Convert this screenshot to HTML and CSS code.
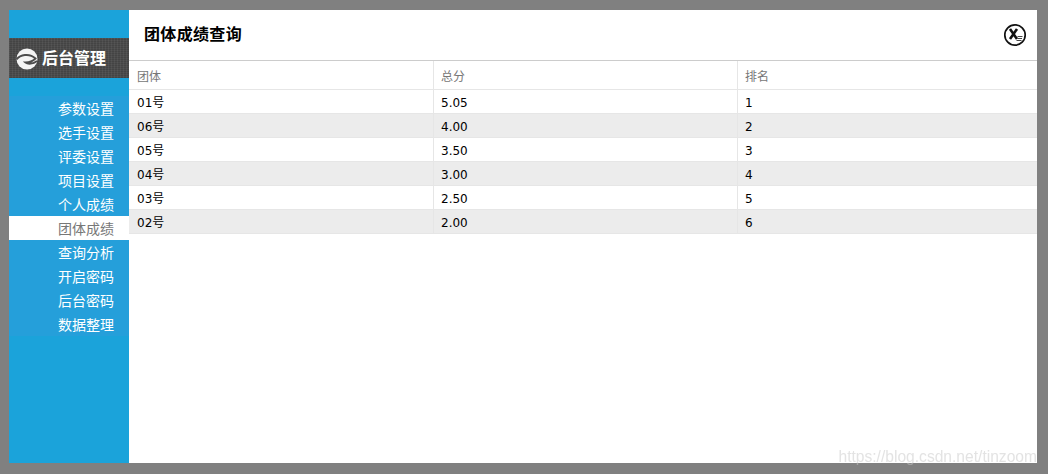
FILE: index.html
```html
<!DOCTYPE html>
<html lang="zh">
<head>
<meta charset="utf-8">
<title>团体成绩查询</title>
<link rel="stylesheet" href="styles.css">
</head>
<body>
<div class="window">
  <aside class="sidebar">
    <div class="logo">
      <svg class="logo-icon" width="22" height="22" viewBox="0 0 22 22">
        <circle cx="11" cy="11" r="10.5" fill="#f4f4f4"/>
        <path d="M0.5 11.5C4 7 13 4.5 19.5 10.5C17 13 13 14.5 9.5 14.5C12 16.5 17 16 21 13" fill="none" stroke="#4c4c4c" stroke-width="1.9"/>
      </svg>
      <span class="logo-text">后台管理</span>
    </div>
    <nav class="menu">
      <a class="menu-item">参数设置</a>
      <a class="menu-item">选手设置</a>
      <a class="menu-item">评委设置</a>
      <a class="menu-item">项目设置</a>
      <a class="menu-item">个人成绩</a>
      <a class="menu-item active">团体成绩</a>
      <a class="menu-item">查询分析</a>
      <a class="menu-item">开启密码</a>
      <a class="menu-item">后台密码</a>
      <a class="menu-item">数据整理</a>
    </nav>
  </aside>
  <main class="content">
    <header class="header">
      <h1 class="title">团体成绩查询</h1>
      <svg class="close" width="24" height="24" viewBox="0 0 24 24">
        <circle cx="12" cy="12" r="10.2" fill="#fff" stroke="#111" stroke-width="1.7"/>
        <path d="M7 6L14 16M14 6L7 16" stroke="#111" stroke-width="2.6" fill="none"/>
        <path d="M14.5 13.5H19.5M14.5 15.5H19M13.5 17.5H18.5" stroke="#444" stroke-width="1" fill="none"/>
      </svg>
    </header>
    <table class="grid">
      <colgroup>
        <col class="col-a">
        <col class="col-b">
        <col class="col-c">
      </colgroup>
      <thead>
        <tr><th>团体</th><th>总分</th><th>排名</th></tr>
      </thead>
      <tbody>
        <tr><td class="name">01号</td><td>5.05</td><td>1</td></tr>
        <tr><td class="name">06号</td><td>4.00</td><td>2</td></tr>
        <tr><td class="name">05号</td><td>3.50</td><td>3</td></tr>
        <tr><td class="name">04号</td><td>3.00</td><td>4</td></tr>
        <tr><td class="name">03号</td><td>2.50</td><td>5</td></tr>
        <tr><td class="name">02号</td><td>2.00</td><td>6</td></tr>
      </tbody>
    </table>
    <div class="watermark">https://blog.csdn.net/tinzoom</div>
  </main>
</div>
</body>
</html>
```
FILE: styles.css
```css
html, body {
  margin: 0;
  height: 100%;
}
body {
  background: #808080;
  padding: 10px 11px 11px 9px;
  box-sizing: border-box;
  font-family: "DejaVu Sans", "Noto Sans CJK SC", sans-serif;
  overflow: hidden;
}
.window {
  display: flex;
  height: 453px;
  background: #fff;
}
.sidebar {
  width: 120px;
  flex: none;
  background: #1ba3da;
  padding-top: 28px;
  box-sizing: border-box;
}
.logo {
  height: 40px;
  display: flex;
  align-items: center;
  gap: 4px;
  padding-left: 7px;
  background-color: #4c4c4c;
  background-image:
    repeating-linear-gradient(90deg, rgba(255,255,255,.05) 0 1px, transparent 1px 3px),
    repeating-linear-gradient(0deg, rgba(0,0,0,.1) 0 1px, transparent 1px 2px);
}
.logo-icon {
  margin-top: 1px;
}
.logo-text {
  color: #fff;
  font: bold 16px/20px "Noto Sans CJK SC", sans-serif;
  margin-top: -2px;
}
.menu {
  display: flex;
  flex-direction: column;
  margin-top: 18px;
  background: #259fda;
}
.menu-item {
  height: 24px;
  padding-right: 15px;
  text-align: right;
  font: 14px/24px "Noto Sans CJK SC", sans-serif;
  color: #fff;
}
.menu-item.active {
  background: #fff;
  color: #777;
}
.content {
  flex: 1;
  position: relative;
  min-width: 0;
}
.header {
  height: 51px;
  box-sizing: border-box;
  display: flex;
  align-items: center;
  justify-content: space-between;
  padding: 0 10px 0 15px;
  border-bottom: 1px solid #ccc;
}
.title {
  margin: -4px 0 0;
  font: bold 16px "Noto Sans CJK SC", sans-serif;
  letter-spacing: .33px;
  color: #000;
}
.grid {
  width: 908px;
  table-layout: fixed;
  border-collapse: separate;
  border-spacing: 0;
  font-size: 12px;
}
.col-a {
  width: 305px;
}
.col-b {
  width: 304px;
}
.grid th, .grid td {
  padding: 0 8px;
  text-align: left;
  border-right: 1px solid #e6e6e6;
  border-bottom: 1px solid #e6e6e6;
  box-sizing: border-box;
}
.grid th + th, .grid td + td {
  padding-left: 7px;
}
.grid th:last-child, .grid td:last-child {
  border-right: none;
}
.grid th {
  height: 29px;
  font-weight: normal;
  color: #777;
}
.grid td {
  height: 24px;
  padding-top: 3px;
  color: #000;
}
.grid td.name {
  padding-top: 0;
}
.grid tbody tr:nth-child(even) {
  background: #ececec;
}
.watermark {
  position: absolute;
  right: 0;
  bottom: -3px;
  font: 15.6px "Liberation Sans", sans-serif;
  color: rgba(200,200,200,.5);
  white-space: nowrap;
  filter: blur(.4px);
}
```
